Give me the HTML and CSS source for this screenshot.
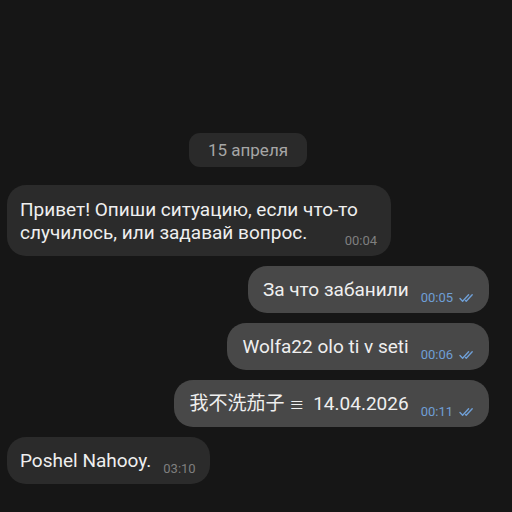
FILE: index.html
```
<!DOCTYPE html>
<html lang="ru">
<head>
<meta charset="utf-8">
<link rel="stylesheet" href="styles.css">
</head>
<body>
<div class="chat">
  <div class="date">15 апреля</div>
  <div class="bubble in"><span class="text">Привет! Опиши ситуацию, если что-то случилось, или задавай вопрос.</span><span class="meta">00:04</span></div>
  <div class="bubble out"><span class="text">За что забанили</span><span class="meta">00:05<svg class="check" viewBox="0 0 16 10" width="16" height="10"><path d="M1 5.5L3.6 8.2L9.6 1.8M6.6 7.6L7.2 8.2L13.2 1.8"/></svg></span></div>
  <div class="bubble out"><span class="text">Wolfa22 olo ti v seti</span><span class="meta">00:06<svg class="check" viewBox="0 0 16 10" width="16" height="10"><path d="M1 5.5L3.6 8.2L9.6 1.8M6.6 7.6L7.2 8.2L13.2 1.8"/></svg></span></div>
  <div class="bubble out"><span class="text">我不洗茄子 <span class="sym">≡</span>14.04.2026</span><span class="meta">00:11<svg class="check" viewBox="0 0 16 10" width="16" height="10"><path d="M1 5.5L3.6 8.2L9.6 1.8M6.6 7.6L7.2 8.2L13.2 1.8"/></svg></span></div>
  <div class="bubble in"><span class="text">Poshel Nahooy.</span><span class="meta">03:10</span></div>
</div>
</body>
</html>
```
FILE: styles.css
```
html, body {
  margin: 0;
  padding: 0;
  background: #161616;
  height: 100%;
}
body {
  font-family: Roboto, "Noto Sans CJK SC", sans-serif;
  color: #efefef;
}
.chat {
  display: flex;
  flex-direction: column;
  gap: 10px;
  padding: 133px 23px 0 7px;
}
.date {
  align-self: center;
  background: #2a2a2a;
  color: #a6a6a6;
  font-size: 17px;
  line-height: 34px;
  padding: 0 19px;
  border-radius: 11px;
  margin-bottom: 8px;
}
.bubble {
  display: flow-root;
  max-width: 357px;
  padding: 12px 14px 12px 14px;
  font-size: 19px;
  line-height: 23px;
  border-radius: 19px;
}
.bubble.in {
  align-self: flex-start;
  background: #2b2b2b;
  padding-left: 13px;
}
.bubble.in:nth-child(2) {
  padding-top: 13px;
}
.bubble.out {
  align-self: flex-end;
  background: #484848;
  padding-left: 15px;
}
.sym {
  display: inline-block;
  width: 15px;
  margin-right: 9px;
  text-align: center;
  font-size: 15px;
  line-height: 15px;
  font-family: "Noto Sans CJK SC", sans-serif;
}
.meta {
  float: right;
  display: flex;
  align-items: center;
  gap: 6px;
  margin: 13px 0 -6px 12px;
  font-size: 13px;
  line-height: 13px;
  color: #7f7f7f;
}
.out .meta {
  color: #6f9fd6;
}
.check {
  fill: none;
  stroke: #6f9fd6;
  stroke-width: 1.4;
  stroke-linecap: round;
  stroke-linejoin: round;
}
```
